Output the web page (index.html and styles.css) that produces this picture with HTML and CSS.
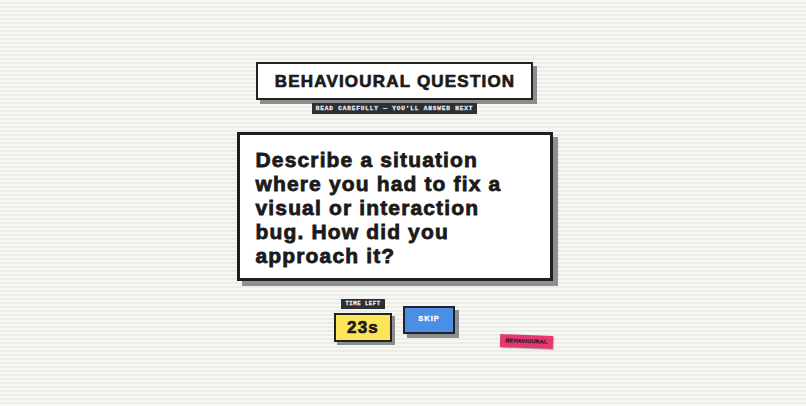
FILE: index.html
```html
<!DOCTYPE html>
<html>
<head>
<meta charset="utf-8">
<link rel="stylesheet" href="styles.css">
</head>
<body>
<div class="page">
  <div class="column">
    <div class="title-box"><h1 class="title">BEHAVIOURAL QUESTION</h1></div>
    <div class="subtitle">READ CAREFULLY — YOU'LL ANSWER NEXT</div>
    <div class="card">
      <p class="question">Describe a situation where you had to fix a visual or interaction bug. How did you approach it?</p>
    </div>
    <div class="controls">
      <div class="timer">
        <div class="timer-label">TIME LEFT</div>
        <div class="timer-box">23s</div>
      </div>
      <button class="skip">SKIP</button>
    </div>
  </div>
  <div class="tag">BEHAVIOURAL</div>
</div>
</body>
</html>
```
FILE: styles.css
```css
* { box-sizing: border-box; }
html, body { margin: 0; padding: 0; }
body {
  width: 806px;
  height: 406px;
  overflow: hidden;
  background-color: #f5f5f0;
  background-image: repeating-linear-gradient(to bottom, #f7f7f3 0px, #f7f7f3 2px, #ecede6 2px, #ecede6 4px);
  font-family: "Liberation Sans", Arial, sans-serif;
}
.page {
  position: relative;
  width: 806px;
  height: 406px;
}
.column {
  display: flex;
  flex-direction: column;
  align-items: center;
  padding-top: 62px;
  padding-right: 17px;
}
.title-box {
  width: 277px;
  height: 38px;
  background: #fff;
  border: 2px solid #222;
  box-shadow: 4px 4px 0 #8d8d8d;
  display: flex;
  align-items: center;
  justify-content: center;
}
.title {
  margin: 0;
  font-size: 17px;
  font-weight: 700;
  letter-spacing: 1.2px;
  color: #1a1a1a;
  padding-left: 1px;
  padding-top: 1px;
  -webkit-text-stroke: 0.7px #1a1a1a;
}
.subtitle {
  margin-top: 3px;
  height: 11px;
  padding: 0 4px;
  background: #2b3036;
  color: #e8e8e8;
  font-family: "Liberation Mono", "DejaVu Sans Mono", monospace;
  font-weight: 700;
  font-size: 6px;
  letter-spacing: 0.9px;
  line-height: 11px;
  white-space: nowrap;
  -webkit-text-stroke: 0.3px #e8e8e8;
}
.card {
  margin-top: 18px;
  width: 316px;
  height: 149px;
  background: #fff;
  border: 3px solid #1e1e1e;
  box-shadow: 5px 5px 0 #8f8f8f;
  padding: 13px 26px 0 16px;
}
.question {
  margin: 0;
  font-size: 21px;
  font-weight: 700;
  line-height: 24px;
  letter-spacing: 1.15px;
  color: #1a1a1a;
  -webkit-text-stroke: 0.8px #1a1a1a;
}
.controls {
  margin-top: 18px;
  display: flex;
  align-items: flex-start;
  gap: 11px;
}
.timer {
  display: flex;
  flex-direction: column;
  align-items: center;
}
.timer-label {
  height: 10px;
  padding: 0 4px;
  background: #2b3036;
  color: #e8e8e8;
  font-family: "Liberation Mono", "DejaVu Sans Mono", monospace;
  font-weight: 700;
  font-size: 5.5px;
  letter-spacing: 0.6px;
  line-height: 10px;
  -webkit-text-stroke: 0.3px #e8e8e8;
}
.timer-box {
  margin-top: 4px;
  width: 58px;
  height: 29px;
  background: #fde55a;
  border: 2px solid #222;
  box-shadow: 3px 3px 0 #8d8d8d;
  display: flex;
  align-items: center;
  justify-content: center;
  font-size: 17px;
  font-weight: 700;
  letter-spacing: 1.2px;
  color: #1a1a1a;
  -webkit-text-stroke: 0.7px #1a1a1a;
}
.skip {
  margin-top: 7px;
  width: 52px;
  height: 28px;
  background: #4a8ee6;
  border: 2px solid #1f232a;
  box-shadow: 4px 4px 0 #8d8d8d;
  color: #fff;
  font-family: "Liberation Sans", Arial, sans-serif;
  font-weight: 700;
  font-size: 7.5px;
  letter-spacing: 1px;
  padding: 0 0 3px 0;
  cursor: pointer;
  -webkit-text-stroke: 0.35px #fff;
}
.tag {
  position: absolute;
  left: 500px;
  top: 335px;
  width: 53px;
  height: 13px;
  background: #e23a70;
  box-shadow: 1px 1px 1px rgba(0,0,0,0.25);
  color: #3a1020;
  font-size: 5.5px;
  font-weight: 700;
  line-height: 13px;
  text-align: center;
  letter-spacing: 0.2px;
  transform: rotate(2deg);
  -webkit-text-stroke: 0.2px #3a1020;
}
```
